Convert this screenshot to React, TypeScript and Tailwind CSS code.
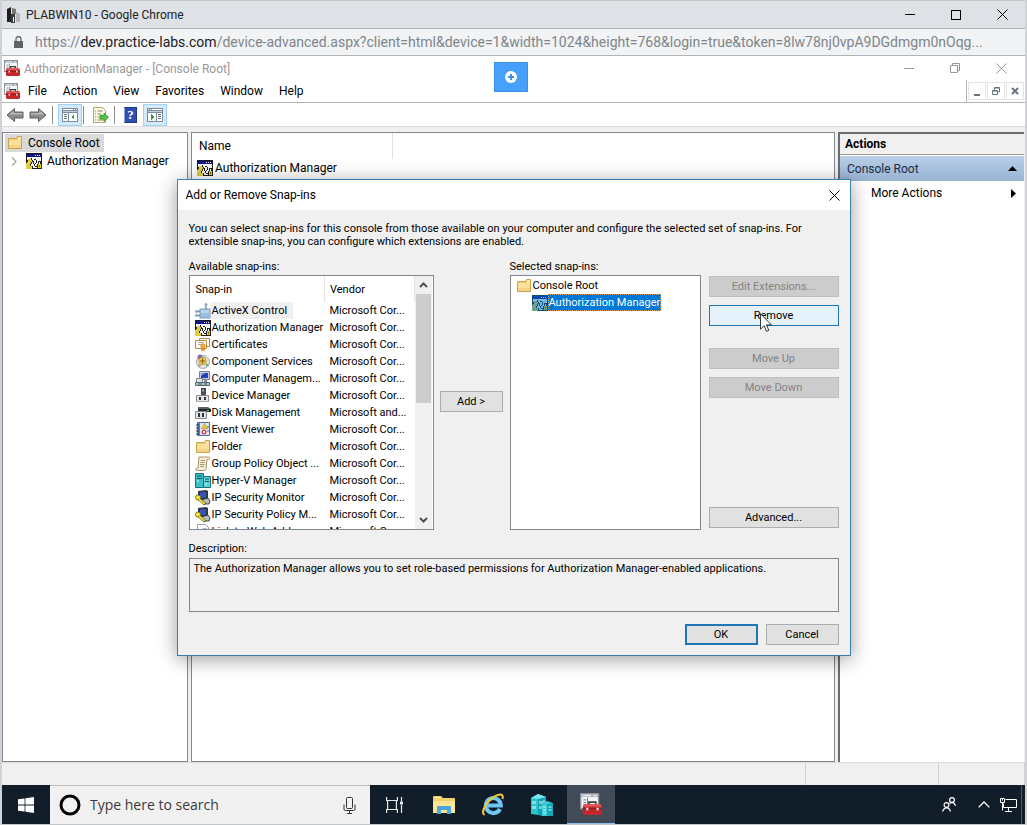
import type { ReactNode } from "react";
import clsx from "clsx";

interface IconProps {
  className?: string;
}

function AuthIcon({ className = "w-4 h-4" }: IconProps) {
  return (
    <svg viewBox="0 0 16 16" className={`shrink-0 ${className}`} shapeRendering="crispEdges">
      <rect width="16" height="16" fill="#1c1c1c" />
      <rect x="1" y="1" width="14" height="3" fill="#14148c" />
      <rect x="9" y="2" width="1" height="1" fill="#fff" />
      <rect x="11" y="2" width="1" height="1" fill="#fff" />
      <rect x="13" y="2" width="1" height="1" fill="#fff" />
      <rect x="1" y="4" width="14" height="11" fill="#f4f4f4" />
      <path d="M0 10h1V8h1V6h3v1h1v2H5v2H4v2h2v3H0z" fill="#e0cc3c" />
      <path d="M1 7h1v2H1zM5 5h1v2H5zM6 7h1v2H6zM5 9h1v2H5zM4 11h1v2H4zM6 13h1v2H6z" fill="#222" />
      <path d="M8 6h2v1H8zM10 7h1v3h-1zM7 8h1v3H7zM8 11h1v2H8zM9 10h1v1H9zM9 13h2v1H9z" fill="#222" />
      <path d="M12 8h3v3h1v5h-5v-5h1z" fill="#222" />
      <path d="M13 9h1v2h-1z" fill="#fff" />
      <rect x="12" y="11" width="3" height="4" fill="#e5d61c" />
      <rect x="13" y="12" width="1" height="2" fill="#6b6200" />
    </svg>
  );
}

function FolderIcon({ className = "w-4 h-4" }: IconProps) {
  return (
    <svg viewBox="0 0 16 16" className={`shrink-0 ${className}`}>
      <path d="M1.5 3.5h8l1-2h4v12h-13z" fill="#f1cf78" stroke="#c9a24c" />
      <path d="M11 2.5h3v1h-3z" fill="#fff" />
      <path d="M2 5h8l1-1h3v9H2z" fill="#fbe09a" />
      <path d="M2 10h12v3H2z" fill="#f3d283" />
    </svg>
  );
}

function ToolboxIcon({ className = "w-4 h-4" }: IconProps) {
  return (
    <svg viewBox="0 0 16 16" className={`shrink-0 ${className}`}>
      <rect x=".5" y=".5" width="13" height="11" fill="#f6f7f8" stroke="#8b939c" />
      <path d="M1 1h12v2H1z" fill="#a9b3be" />
      <path d="M2 2h6M10 2h2" stroke="#fff" strokeWidth=".8" />
      <path d="M2.5 5h2M2.5 7h2M2.5 9h1M5.5 3.5V8" stroke="#7d8791" strokeWidth=".8" />
      <path d="M6.5 8.5V6.6h5v1.9" fill="none" stroke="#3c3c3c" strokeWidth="1.2" />
      <path d="M3 8h12l1 2.5V15l-1 1H3l-1-1v-5z" fill="#c3272b" />
      <path d="M3 8h12l.8 2H2.3z" fill="#e0575a" />
      <path d="M2 11.5h14" stroke="#8c1519" strokeWidth=".8" />
      <path d="M4.5 10.8h1.600v1.800H4.500zM12 10.800h1.600v1.800H12z" fill="#e6e6e6" />
    </svg>
  );
}

function ActiveXIcon() {
  return (
    <svg viewBox="0 0 16 16" className="w-4 h-4 shrink-0">
      <rect x="5" y="6" width="10" height="9" fill="#9dbfdc" stroke="#7ea0c0" />
      <path d="M11 6V2M5 8.500H1.500M5 12.500H1.500" stroke="#6d8aa5" strokeWidth="1.300" />
      <circle cx="11" cy="1.500" r="1.500" fill="#8fa9c2" />
      <circle cx="1.500" cy="8.500" r="1.400" fill="#8fa9c2" />
      <circle cx="1.500" cy="12.500" r="1.400" fill="#8fa9c2" />
      <path d="M6 7h8v3H6z" fill="#b9d3ea" />
    </svg>
  );
}

function CertificateIcon() {
  return (
    <svg viewBox="0 0 16 16" className="w-4 h-4 shrink-0">
      <path d="M4.500 1.500h10v8h-10z" fill="#fffdf4" stroke="#b48a46" />
      <path d="M.500 3.500h11v8H.500z" fill="#fffdf4" stroke="#b48a46" />
      <path d="M3 5.500h6M3 7.500h3" stroke="#8f97a3" strokeWidth=".8" />
      <path d="M6.500 10l-.5 4.500 2-1.200 2 1.200-.5-4.500z" fill="#e08a2a" />
      <circle cx="8" cy="9" r="2.300" fill="#f0b13c" stroke="#c9832a" strokeWidth=".6" />
    </svg>
  );
}

function ComponentIcon() {
  return (
    <svg viewBox="0 0 16 16" className="w-4 h-4 shrink-0">
      <circle cx="8" cy="8" r="6.500" fill="#e4e6e8" stroke="#a3a9ae" />
      <circle cx="5" cy="3" r="2.500" fill="#7f6fb5" />
      <circle cx="7.500" cy="7" r="3.800" fill="#f0d24a" stroke="#a98a20" strokeWidth=".7" />
      <path d="M7.500 4.500v5M5 7h5" stroke="#8a5a10" strokeWidth="1.200" />
      <circle cx="12" cy="11" r="1.500" fill="#7eb377" />
      <circle cx="4.500" cy="11.500" r="1.200" fill="#d08a8a" />
    </svg>
  );
}

function ComputerIcon() {
  return (
    <svg viewBox="0 0 16 16" className="w-4 h-4 shrink-0">
      <path d="M4.500.5h10v8h-10z" fill="#c9ccd4" stroke="#7c818c" />
      <path d="M6 2h7v5H6z" fill="#2341b8" />
      <path d="M6 2h4L6 5z" fill="#7fa0ec" />
      <path d="M9 9h3v2H9z" fill="#8c929c" />
      <path d="M1.500 7.500h6v4h-6z" fill="#dfe3e8" stroke="#7c818c" />
      <path d="M.500 11.500h14v3H.500z" fill="#b9c2cc" stroke="#5d6773" />
      <path d="M3 13h4M9 13h3" stroke="#2f6f45" />
    </svg>
  );
}

function DeviceIcon() {
  return (
    <svg viewBox="0 0 16 16" className="w-4 h-4 shrink-0">
      <path d="M6 0h5v9H6z" fill="#4c4f52" />
      <path d="M7.500 1.500h1.500v2H7.500z" fill="#b7babd" />
      <path d="M1.500 7.500h12v6h-12z" fill="#e3e5e7" stroke="#85898d" />
      <path d="M4 9h2v3H4zM9 9h2v3H9z" fill="#33363a" />
      <path d="M1.500 13.500h12" stroke="#a9adb1" />
    </svg>
  );
}

function DiskIcon() {
  return (
    <svg viewBox="0 0 16 16" className="w-4 h-4 shrink-0">
      <path d="M3 2h10l3 2v3H3z" fill="#5c6064" />
      <path d="M3 4h13v3H3z" fill="#26292c" />
      <path d="M12 5h2v1h-2z" fill="#53d86a" />
      <path d="M.500 6.500h11v7H.500z" fill="#e0e2e4" stroke="#85898d" />
      <path d="M3 8h2v4H3zM7 8h2v4H7z" fill="#33363a" />
    </svg>
  );
}

function EventIcon() {
  return (
    <svg viewBox="0 0 16 16" className="w-4 h-4 shrink-0">
      <path d="M2.500.5h12v13h-12z" fill="#dbe7f5" stroke="#4a6ea9" />
      <path d="M3 1h2v12H3z" fill="#4f7cc4" />
      <path d="M1 3h3M1 6h3M1 9h3M1 12h3" stroke="#2b3442" strokeWidth=".9" />
      <path d="M9.500 1.500l3 5h-6z" fill="#f4cd2e" stroke="#b58d12" strokeWidth=".6" />
      <circle cx="9" cy="10" r="2.500" fill="#d44646" />
      <path d="M8 9l2 2M10 9l-2 2" stroke="#fff" strokeWidth=".9" />
      <path d="M12 5h2M12 9h2" stroke="#4a6ea9" />
    </svg>
  );
}

function ScrollIcon() {
  return (
    <svg viewBox="0 0 16 16" className="w-4 h-4 shrink-0">
      <path d="M4 1h9.500c1.500 0 1.500 2.500 0 2.500h-1.500L11 12.500c0 1.500-1 2-2 2H2c-1.500 0-1.500-2.500 0-2.500h1z" fill="#f7efd9" stroke="#a8946a" />
      <path d="M5.500 4.500h4.500M5.300 6.500h4.500M5 8.500h4.500M5 10.500h4" stroke="#8d8062" strokeWidth=".8" />
    </svg>
  );
}

function HyperVIcon() {
  return (
    <svg viewBox="0 0 16 16" className="w-4 h-4 shrink-0">
      <path d="M.500.500h8v14h-8z" fill="#3fc0c9" stroke="#11727c" />
      <path d="M8.500 3.500h7v11h-7z" fill="#5cd3da" stroke="#11727c" />
      <path d="M2 3h5M2 5.500h5M10 6h4M10 8.500h4" stroke="#0b5962" />
      <path d="M2 8h2M10 11h2" stroke="#e9ffff" />
    </svg>
  );
}

function IpSecIcon() {
  return (
    <svg viewBox="0 0 16 16" className="w-4 h-4 shrink-0">
      <path d="M3 1l8-1 2 1v8l-8 2-2-2z" fill="#303540" />
      <path d="M5 2.500l6-.5v5.500l-6 1z" fill="#3156c4" />
      <path d="M6 10l7-2 2 3-1 3H8z" fill="#b8bbc1" stroke="#2a2a2a" strokeWidth=".8" />
      <circle cx="3" cy="7.500" r="2.600" fill="#f5e83a" stroke="#4d4700" strokeWidth=".7" />
      <path d="M4 9l6 5.500" stroke="#4d4700" strokeWidth="3" />
      <path d="M4 9l5.500 5" stroke="#f5e83a" strokeWidth="1.700" />
    </svg>
  );
}

function LinkIcon() {
  return (
    <svg viewBox="0 0 16 16" className="w-4 h-4 shrink-0">
      <path d="M2.500.5h8l3 3v12h-11z" fill="#fff" stroke="#9aa0a6" />
      <path d="M5 6l4-2v4z" fill="#62ab74" />
      <path d="M9 4h3v4H9z" fill="#a6bfe0" />
    </svg>
  );
}

function NavArrow({ flip }: { flip?: boolean }) {
  return (
    <svg viewBox="0 0 18 16" className={clsx("w-[18px] h-4", flip && "-scale-x-100")}>
      <path d="M1 8l7.500-6.500V5H17v6H8.500v3.500z" fill="#8c8c8c" stroke="#5f5f5f" />
      <path d="M3 7.500l4.500-3.800V6H16v1.500z" fill="#b9b9b9" />
    </svg>
  );
}

function PaneIcon({ flip }: { flip?: boolean }) {
  return (
    <svg viewBox="0 0 16 14" className={clsx("w-4 h-[14px]", flip && "-scale-x-100")} shapeRendering="crispEdges">
      <rect width="16" height="14" fill="#7e8c9a" />
      <path d="M1 1h10v1H1zM12 1h1v1h-1zM14 1h1v1h-1z" fill="#fff" />
      <path d="M1 3h14v1H1z" fill="#c5d0dc" />
      <path d="M1 5h5v8H1zM7 5h8v8H7z" fill="#fff" />
      <path d="M2 6h3v1H2zM2 8h3v1H2zM2 10h3v1H2z" fill="#5b6b7d" />
      <path d="M12 6v6l-3-3z" fill="#2fa43a" />
    </svg>
  );
}

function ExportIcon() {
  return (
    <svg viewBox="0 0 17 16" className="w-[17px] h-4">
      <path d="M1.500.5h9l3 3v12h-12z" fill="#fdf8e2" stroke="#b3a77c" />
      <path d="M3 4h1M5.500 4h5M3 7h1M5.500 7h4M3 10h1M5.500 10h2M3 13h1M5.500 13h6" stroke="#8c8670" />
      <path d="M8 8.500h4V6l4.500 4.300L12 14.500V12H8z" fill="#55c341" stroke="#2f8f22" strokeWidth=".8" />
    </svg>
  );
}

function HelpIcon() {
  return (
    <span className="w-[13px] h-4 bg-[#2f4fae] border border-[#1f3580] border-l-[#8ba0dc] text-white font-bold text-[13px] leading-[14px] text-center font-['Liberation_Serif',serif]">
      ?
    </span>
  );
}

function CloseGlyph({ className = "w-[11px] h-[11px]" }: IconProps) {
  return (
    <svg viewBox="0 0 11 11" className={className} fill="none" stroke="currentColor">
      <path d="M.5.5l10 10M10.500.5l-10 10" />
    </svg>
  );
}

const snapIns: { name: string; vendor: string; icon: ReactNode; hot?: boolean }[] = [
  { name: "ActiveX Control", vendor: "Microsoft Cor...", icon: <ActiveXIcon />, hot: true },
  { name: "Authorization Manager", vendor: "Microsoft Cor...", icon: <AuthIcon /> },
  { name: "Certificates", vendor: "Microsoft Cor...", icon: <CertificateIcon /> },
  { name: "Component Services", vendor: "Microsoft Cor...", icon: <ComponentIcon /> },
  { name: "Computer Managem...", vendor: "Microsoft Cor...", icon: <ComputerIcon /> },
  { name: "Device Manager", vendor: "Microsoft Cor...", icon: <DeviceIcon /> },
  { name: "Disk Management", vendor: "Microsoft and...", icon: <DiskIcon /> },
  { name: "Event Viewer", vendor: "Microsoft Cor...", icon: <EventIcon /> },
  { name: "Folder", vendor: "Microsoft Cor...", icon: <FolderIcon /> },
  { name: "Group Policy Object ...", vendor: "Microsoft Cor...", icon: <ScrollIcon /> },
  { name: "Hyper-V Manager", vendor: "Microsoft Cor...", icon: <HyperVIcon /> },
  { name: "IP Security Monitor", vendor: "Microsoft Cor...", icon: <IpSecIcon /> },
  { name: "IP Security Policy M...", vendor: "Microsoft Cor...", icon: <IpSecIcon /> },
  { name: "Link to Web Address", vendor: "Microsoft Cor...", icon: <LinkIcon /> },
];

function DialogButton({
  children,
  className,
  disabled,
  tone = "normal",
}: {
  children: ReactNode;
  className?: string;
  disabled?: boolean;
  tone?: "normal" | "hover" | "default";
}) {
  return (
    <button
      type="button"
      disabled={disabled}
      className={clsx(
        "h-[21px] flex items-center justify-center",
        disabled && "bg-[#cccccc] border border-[#bfbfbf] text-[#838383]",
        !disabled && tone === "normal" && "bg-[#e1e1e1] border border-[#adadad]",
        !disabled && tone === "hover" && "bg-[#e5f1fb] border border-[#1f77b4]",
        !disabled && tone === "default" && "bg-[#e1e1e1] border-2 border-[#1f77b4]",
        className
      )}
    >
      {children}
    </button>
  );
}

function ChromeBar() {
  return (
    <>
      <header className="h-[29px] shrink-0 bg-[#dee1e6] border-t border-b border-t-[#c4c6ca] border-b-[#b1b3b6] flex items-center pl-1 text-[#222]">
        <svg viewBox="0 0 16 16" className="w-4 h-4">
          <path d="M1 2l4-2v15H1z" fill="#1f1f1f" />
          <path d="M5 7l4-1v10H5z" fill="#3c3c3c" />
          <path d="M6 1l4 1v5L6 6z" fill="#777" />
          <path d="M10 5l4 2v8h-4z" fill="#b5b7ba" />
          <path d="M7 10h1v5H7z" fill="#eee" />
        </svg>
        <h1 className="ml-1 grow text-xs">PLABWIN10 - Google Chrome</h1>
        <div className="flex text-black">
          <button aria-label="Minimize" className="w-[46px] h-6 flex items-center justify-center">
            <span className="w-[10px] h-px bg-black" />
          </button>
          <button aria-label="Maximize" className="w-[46px] h-6 flex items-center justify-center">
            <span className="w-[10px] h-[10px] border border-black" />
          </button>
          <button aria-label="Close" className="w-[46px] h-6 flex items-center justify-center">
            <CloseGlyph />
          </button>
        </div>
      </header>
      <div className="h-[27px] shrink-0 bg-[#f1f3f4] border-b border-[#b1b3b6] flex items-center pl-3">
        <svg viewBox="0 0 9 12" className="w-[9px] h-3 shrink-0">
          <path d="M0 5h9v7H0z" fill="#5f6368" />
          <path d="M2 5.500V3a2.500 2.500 0 015 0v2.500" fill="none" stroke="#5f6368" strokeWidth="1.300" />
        </svg>
        <p className="ml-3 text-sm text-[#80868b] whitespace-nowrap">
          https://<span className="text-[#202124]">dev.practice-labs.com</span>
          /device-advanced.aspx?client=html&amp;device=1&amp;width=1024&amp;height=768&amp;login=true&amp;token=8lw78nj0vpA9DGdmgm0nOqg...
        </p>
      </div>
    </>
  );
}

function ConsoleHeader() {
  return (
    <div className="bg-white shrink-0">
      <div className="h-6 flex items-center pl-[2px] text-[#999]">
        <ToolboxIcon />
        <h2 className="ml-1 pt-px grow text-xs">AuthorizationManager - [Console Root]</h2>
        <div className="flex pr-px">
          <button aria-label="Minimize console" className="w-[46px] h-5 flex items-center justify-center">
            <span className="w-[10px] h-px bg-[#999]" />
          </button>
          <button aria-label="Restore console" className="w-[46px] h-5 flex items-center justify-center">
            <svg viewBox="0 0 10 10" className="w-[10px] h-[10px]" fill="none" stroke="currentColor">
              <path d="M.5 2.500h7v7h-7zM2.500 2.500v-2h7v7h-2" />
            </svg>
          </button>
          <button aria-label="Close console" className="w-[46px] h-5 flex items-center justify-center">
            <CloseGlyph />
          </button>
        </div>
      </div>
      <div className="h-[23px] flex items-center pl-[2px] border-b border-[#b4b4b4]">
        <ToolboxIcon />
        <nav className="ml-2 grow flex gap-4 text-xs">
          <button>File</button>
          <button>Action</button>
          <button>View</button>
          <button>Favorites</button>
          <button>Window</button>
          <button>Help</button>
        </nav>
        <div className="h-full flex items-center gap-px border-l border-[#b4b4b4] px-px text-[#6b7480]">
          <button aria-label="Minimize child" className="w-[18px] h-[18px] border border-[#e3e3e3] flex items-center justify-center pt-2">
            <span className="w-[6px] h-[2px] bg-[#6b7480]" />
          </button>
          <button aria-label="Restore child" className="w-[18px] h-[18px] border border-[#e3e3e3] flex items-center justify-center">
            <svg viewBox="0 0 8 8" className="w-2 h-2" fill="none" stroke="currentColor">
              <path d="M.5 3.500h5v4h-5zM.5 4h5M2.500 3V.500h5v4.500H6M2.500 1h5" />
            </svg>
          </button>
          <button aria-label="Close child" className="w-[18px] h-[18px] border border-[#e3e3e3] flex items-center justify-center">
            <svg viewBox="0 0 8 8" className="w-2 h-2" stroke="currentColor" strokeWidth="2">
              <path d="M1 1l6 6M7 1L1 7" />
            </svg>
          </button>
        </div>
      </div>
      <div className="h-6 flex items-center pl-1 border-b border-[#dcdcdc]">
        <button aria-label="Back"><NavArrow /></button>
        <button aria-label="Forward" className="ml-[5px]"><NavArrow flip /></button>
        <span className="w-px h-[18px] ml-[5px] bg-[#8d8d8d]" />
        <button aria-label="Show or hide console tree" className="w-6 h-[22px] ml-[5px] bg-[#d3eafc] border border-[#9fd0f5] flex items-center justify-center">
          <PaneIcon />
        </button>
        <span className="w-px h-[18px] ml-px bg-[#8d8d8d]" />
        <button aria-label="Export list" className="ml-2"><ExportIcon /></button>
        <span className="w-px h-[18px] ml-[5px] bg-[#8d8d8d]" />
        <button aria-label="Help topics" className="ml-[9px] flex"><HelpIcon /></button>
        <button aria-label="Show or hide action pane" className="w-6 h-[22px] ml-[6px] bg-[#d3eafc] border border-[#9fd0f5] flex items-center justify-center">
          <PaneIcon flip />
        </button>
      </div>
    </div>
  );
}

function ConsolePanes() {
  return (
    <main className="grow min-h-0 flex pt-[5px] pr-px text-xs">
      <aside className="w-[186px] shrink-0 bg-white border border-[#828790]">
        <ul className="pt-px pl-[2px]">
          <li className="flex">
            <span className="h-[18px] flex items-center bg-[#d9d9d9] pl-[2px] pr-1">
              <FolderIcon />
              <span className="ml-[5px]">Console Root</span>
            </span>
          </li>
          <li className="flex items-center h-[18px] pl-[6px]">
            <svg viewBox="0 0 6 9" className="w-[6px] h-[9px]" fill="none" stroke="#a6a6a6" strokeWidth="1.300">
              <path d="M1 .5l4 4-4 4" />
            </svg>
            <AuthIcon className="w-4 h-4 ml-[9px]" />
            <span className="ml-[5px]">Authorization Manager</span>
          </li>
        </ul>
      </aside>
      <section className="ml-[3px] grow bg-white border border-[#828790]">
        <div className="flex h-[26px] items-center">
          <span className="w-[201px] h-full pl-[7px] flex items-center border-r border-[#e0e0e0]">Name</span>
        </div>
        <div className="flex items-center h-[18px] pl-[5px]">
          <AuthIcon />
          <span className="ml-[2px]">Authorization Manager</span>
        </div>
      </section>
      <aside className="ml-[3px] w-[186px] shrink-0 bg-white border-t-2 border-l-2 border-[#6d6d6d]">
        <h3 className="h-[21px] pl-[5px] flex items-center font-bold bg-[#f0f0f0] border-b border-[#9a9a9a]">Actions</h3>
        <div className="mt-px h-[25px] px-[7px] flex items-center justify-between bg-linear-to-b from-[#b9cfe8] to-[#98b3d4] text-[#1a2b45]">
          Console Root
          <svg viewBox="0 0 9 5" className="w-[9px] h-[5px]">
            <path d="M0 5L4.500 0 9 5z" fill="#000" />
          </svg>
        </div>
        <button className="w-full h-6 pl-[31px] pr-2 flex items-center justify-between">
          More Actions
          <svg viewBox="0 0 5 9" className="w-[5px] h-[9px]">
            <path d="M0 0l5 4.500L0 9z" fill="#000" />
          </svg>
        </button>
      </aside>
    </main>
  );
}

function AvailableList() {
  return (
    <div className="w-[245px] h-[255px] bg-white border border-[#828790] flex overflow-hidden">
      <div className="grow overflow-hidden">
        <table className="w-full table-fixed border-collapse" aria-labelledby="available-label">
          <thead>
            <tr className="h-[26px]">
              <th className="w-[135px] p-0 pl-[6px] text-left font-normal border-r border-[#e5e5e5]">Snap-in</th>
              <th className="p-0 pl-[5px] text-left font-normal border-r border-[#e5e5e5]">Vendor</th>
            </tr>
          </thead>
          <tbody>
            {snapIns.map((item) => (
              <tr key={item.name} className="h-[17px]">
                <td className="p-0 pl-[5px]">
                  <div className="h-[17px] flex items-center whitespace-nowrap">
                    {item.icon}
                    <span className={clsx("h-[17px] flex items-center pl-px", item.hot && "bg-[#f0f0f0] pr-[6px]")}>
                      {item.name}
                    </span>
                  </div>
                </td>
                <td className="p-0 pl-[5px] whitespace-nowrap">{item.vendor}</td>
              </tr>
            ))}
          </tbody>
        </table>
      </div>
      <div className="w-[17px] mr-px shrink-0 bg-[#f0f0f0] flex flex-col items-center">
        <span className="h-[18px] flex items-center">
          <svg viewBox="0 0 9 6" className="w-[9px] h-[6px]" fill="none" stroke="#505050" strokeWidth="2">
            <path d="M1 5l3.500-3.500L8 5" />
          </svg>
        </span>
        <span className="w-[15px] h-[109px] bg-[#cdcdcd]" />
        <span className="mt-auto h-[18px] flex items-center">
          <svg viewBox="0 0 9 6" className="w-[9px] h-[6px]" fill="none" stroke="#505050" strokeWidth="2">
            <path d="M1 1l3.500 3.500L8 1" />
          </svg>
        </span>
      </div>
    </div>
  );
}

function SnapInDialog() {
  return (
    <div
      role="dialog"
      aria-label="Add or Remove Snap-ins"
      className="w-[674px] bg-[#f0f0f0] border border-[#3a7fb0] shadow-[0_3px_18px_rgba(0,0,0,0.4)] text-[11px] leading-[13px]"
    >
      <div className="h-[30px] bg-white flex items-center justify-between pl-2 pr-[10px]">
        <h2 className="text-xs">Add or Remove Snap-ins</h2>
        <button aria-label="Close dialog">
          <CloseGlyph />
        </button>
      </div>
      <div className="px-[11px] pt-3 pb-[10px]">
        <p>
          You can select snap-ins for this console from those available on your computer and configure the selected set of snap-ins. For<br />
          extensible snap-ins, you can configure which extensions are enabled.
        </p>
        <div className="mt-3 flex">
          <div>
            <div id="available-label" className="mb-[2px]">Available snap-ins:</div>
            <AvailableList />
          </div>
          <div className="ml-[6px] pt-[131px]">
            <DialogButton className="w-[63px]">Add &gt;</DialogButton>
          </div>
          <div className="ml-[7px]">
            <div className="mb-[2px]">Selected snap-ins:</div>
            <div className="w-[191px] h-[255px] bg-white border border-[#828790] pt-px">
              <div className="h-[17px] flex items-center pl-[5px]">
                <FolderIcon />
                <span className="ml-px">Console Root</span>
              </div>
              <div className="h-[17px] flex items-center pl-[21px]">
                <span className="relative flex">
                  <AuthIcon />
                  <span className="absolute inset-0 bg-[#0078d7]/50" />
                </span>
                <span className="h-[17px] flex items-center bg-[#0078d7] text-white border border-dotted border-[#e09a5a]">
                  Authorization Manager
                </span>
              </div>
            </div>
          </div>
          <div className="ml-2 mt-4 w-[130px] flex flex-col">
            <DialogButton disabled>Edit Extensions...</DialogButton>
            <div className="relative mt-2">
              <DialogButton tone="hover" className="w-full">Remove</DialogButton>
              <svg viewBox="0 0 12 19" className="absolute left-[51px] top-2 w-3 h-[19px]">
                <path d="M.5.700v15.500l3.600-3.500 2.400 5.600 2.300-1-2.400-5.400h5z" fill="#fff" stroke="#222" strokeWidth=".9" />
              </svg>
            </div>
            <DialogButton disabled className="mt-[22px]">Move Up</DialogButton>
            <DialogButton disabled className="mt-2">Move Down</DialogButton>
            <DialogButton className="mt-auto mb-[2px]">Advanced...</DialogButton>
          </div>
        </div>
        <label htmlFor="description" className="block mt-3 mb-[3px]">Description:</label>
        <textarea
          id="description"
          readOnly
          className="block w-full h-[54px] resize-none bg-[#f0f0f0] border border-[#828790] px-1 py-[3px] outline-none"
          value="The Authorization Manager allows you to set role-based permissions for Authorization Manager-enabled applications."
        />
        <div className="mt-3 flex justify-end gap-2">
          <DialogButton tone="default" className="w-[73px]">OK</DialogButton>
          <DialogButton className="w-[73px]">Cancel</DialogButton>
        </div>
      </div>
    </div>
  );
}

function Taskbar() {
  return (
    <footer className="h-10 shrink-0 bg-[#111d29] border-b border-[#c4c6ca] flex items-stretch">
      <button aria-label="Start" className="w-12 flex items-center justify-center">
        <svg viewBox="0 0 16 16" className="w-4 h-4" fill="#fff">
          <path d="M0 2.300L6.600 1.400V7.600H0zM7.400 1.300L16 0v7.600H7.400zM0 8.400h6.600v6.200L0 13.700zM7.400 8.400H16V16l-8.600-1.300z" />
        </svg>
      </button>
      <div className="w-80 bg-[#f1f1f1] border-t border-[#c0c0c0] flex items-center pl-2 pr-[14px]">
        <svg viewBox="0 0 24 24" className="w-6 h-6">
          <circle cx="12" cy="12" r="9" fill="none" stroke="#000" strokeWidth="3" />
        </svg>
        <input
          aria-label="Type here to search"
          placeholder="Type here to search"
          className="ml-2 grow min-w-0 bg-transparent outline-none text-sm font-['Open_Sans',sans-serif] placeholder:text-[#3a3a3a]"
        />
        <svg viewBox="0 0 13 17" className="w-[13px] h-[17px]" fill="none" stroke="#333">
          <path d="M3.500 1.500q0-1 1-1h4q1 0 1 1v9q0 1-1 1h-4q-1 0-1-1zM1 7.500V12q0 1.500 1.500 1.500h8q1.500 0 1.500-1.500V7.500M6.500 13.500v3M4 16.500h5" />
        </svg>
      </div>
      <div className="flex gap-px">
        <button aria-label="Task view" className="w-[49px] flex items-center justify-center">
          <svg viewBox="0 0 17 16" className="w-[17px] h-4" fill="none" stroke="#e8eaec" strokeWidth="1.200">
            <path d="M.6 0v3.500h10.800V0M.6 16v-3.500h10.800V16M1.600 3.500v9M10.400 3.500v9M15.500 0v4M15.500 8v8" />
            <path d="M14 4.500h3v3h-3z" fill="#e8eaec" stroke="none" />
          </svg>
        </button>
        <button aria-label="File Explorer" className="w-12 flex items-center justify-center">
          <svg viewBox="0 0 22 20" className="w-[22px] h-5">
            <path d="M0 2q0-1 1-1h7l2 2h11q1 0 1 1v14H0z" fill="#f4cf6b" />
            <path d="M0 6h22v12H0z" fill="#ffe394" />
            <path d="M2 2h5v1H2z" fill="#fff3c4" />
            <path d="M4 12q0-1 1-1h12q1 0 1 1v7h-4v-4H8v4H4z" fill="#48a6dc" />
          </svg>
        </button>
        <button aria-label="Internet Explorer" className="w-12 flex items-center justify-center">
          <svg viewBox="0 0 24 24" className="w-6 h-6" fill="none">
            <path d="M19 16a7.500 7.500 0 11.800-3.500H7" stroke="#6ec8f5" strokeWidth="4" />
            <path d="M3.500 22C-1 19 7 5 17 2c4-1.200 5.500.5 4.500 4" stroke="#f4c832" strokeWidth="2" />
          </svg>
        </button>
        <button aria-label="Server Manager" className="w-12 flex items-center justify-center">
          <svg viewBox="0 0 22 22" className="w-[22px] h-[22px]">
            <path d="M0 4l7-4 8 3v19l-8-1-7-1z" fill="#2cc3cf" />
            <path d="M7 5l8-2v19l-8-1z" fill="#12a2b0" />
            <path d="M0 4l7-4 8 3-8 2z" fill="#7be6ec" />
            <path d="M2 7v3M4 7v3M2 12v3M4 12v3M9 7v3M11 7v3M13 6v3M9 12v3M11 12v3" stroke="#d8fbfd" />
            <path d="M11 9l5-2 6 2v13H11z" fill="#35cdd8" />
            <path d="M16 10l6-1v13h-6z" fill="#15a9b7" />
            <path d="M12 13h3M12 16h3M12 19h3M17.500 13h3M17.500 16h3" stroke="#d8fbfd" />
          </svg>
        </button>
        <button aria-label="Console" className="w-12 bg-[#414b57] border-b border-[#8fbfe6] flex items-center justify-center">
          <ToolboxIcon className="w-[22px] h-[22px]" />
        </button>
      </div>
      <div className="ml-auto flex items-center text-white pr-[3px]">
        <svg viewBox="0 0 14 15" className="w-[14px] h-[15px]" fill="none" stroke="currentColor" strokeWidth="1.200">
          <circle cx="10" cy="3" r="2.400" />
          <circle cx="4.500" cy="8" r="2.400" />
          <path d="M.6 14.500Q1.500 11 4.500 10.800T8.400 14.500M7.500 6.500Q8.500 5.600 10 5.600q2.800 0 3.400 3.400" />
        </svg>
        <svg viewBox="0 0 12 7" className="ml-[22px] w-3 h-[7px]" fill="none" stroke="currentColor" strokeWidth="1.300">
          <path d="M.6 6.400L6 1l5.400 5.400" />
        </svg>
        <svg viewBox="0 0 17 14" className="ml-[10px] w-[17px] h-[14px]" fill="none" stroke="currentColor">
          <path d="M5.500 1.500h11v8h-13V5.500M8.500 9.500v4M5 13.500h7M.5.500h4v4h-4zM2.500 4.500v8" />
          <path d="M2.500.5v2" />
        </svg>
        <span className="ml-1 w-px h-[39px] bg-[#4f5a66]" />
      </div>
    </footer>
  );
}

export default function App() {
  return (
    <div className="relative h-screen flex flex-col bg-[#f0f0f0] border-x-2 border-[#d0d2d5] text-black font-['Roboto','Open_Sans',sans-serif] overflow-hidden">
      <ChromeBar />
      <ConsoleHeader />
      <ConsolePanes />
      <div className="h-[23px] shrink-0 flex justify-end border-t border-[#dcdcdc]">
        <span className="w-[133px] border-l border-[#d0d0d0]" />
        <span className="w-[87px] border-x border-[#d0d0d0]" />
      </div>
      <Taskbar />
      <div className="absolute inset-x-0 top-[62px] pr-[6px] flex justify-center">
        <button aria-label="Open lab toolbar" className="w-[34px] h-[30px] bg-[#46a0fc] border border-[#3a8fe6] flex items-center justify-center">
          <svg viewBox="0 0 12 12" className="w-3 h-3">
            <circle cx="6" cy="6" r="6" fill="#fff" />
            <path d="M6 3v6M3 6h6" stroke="#3f93ea" strokeWidth="2" />
          </svg>
        </button>
      </div>
      <div className="absolute inset-x-0 top-[179px] flex justify-center">
        <SnapInDialog />
      </div>
    </div>
  );
}
